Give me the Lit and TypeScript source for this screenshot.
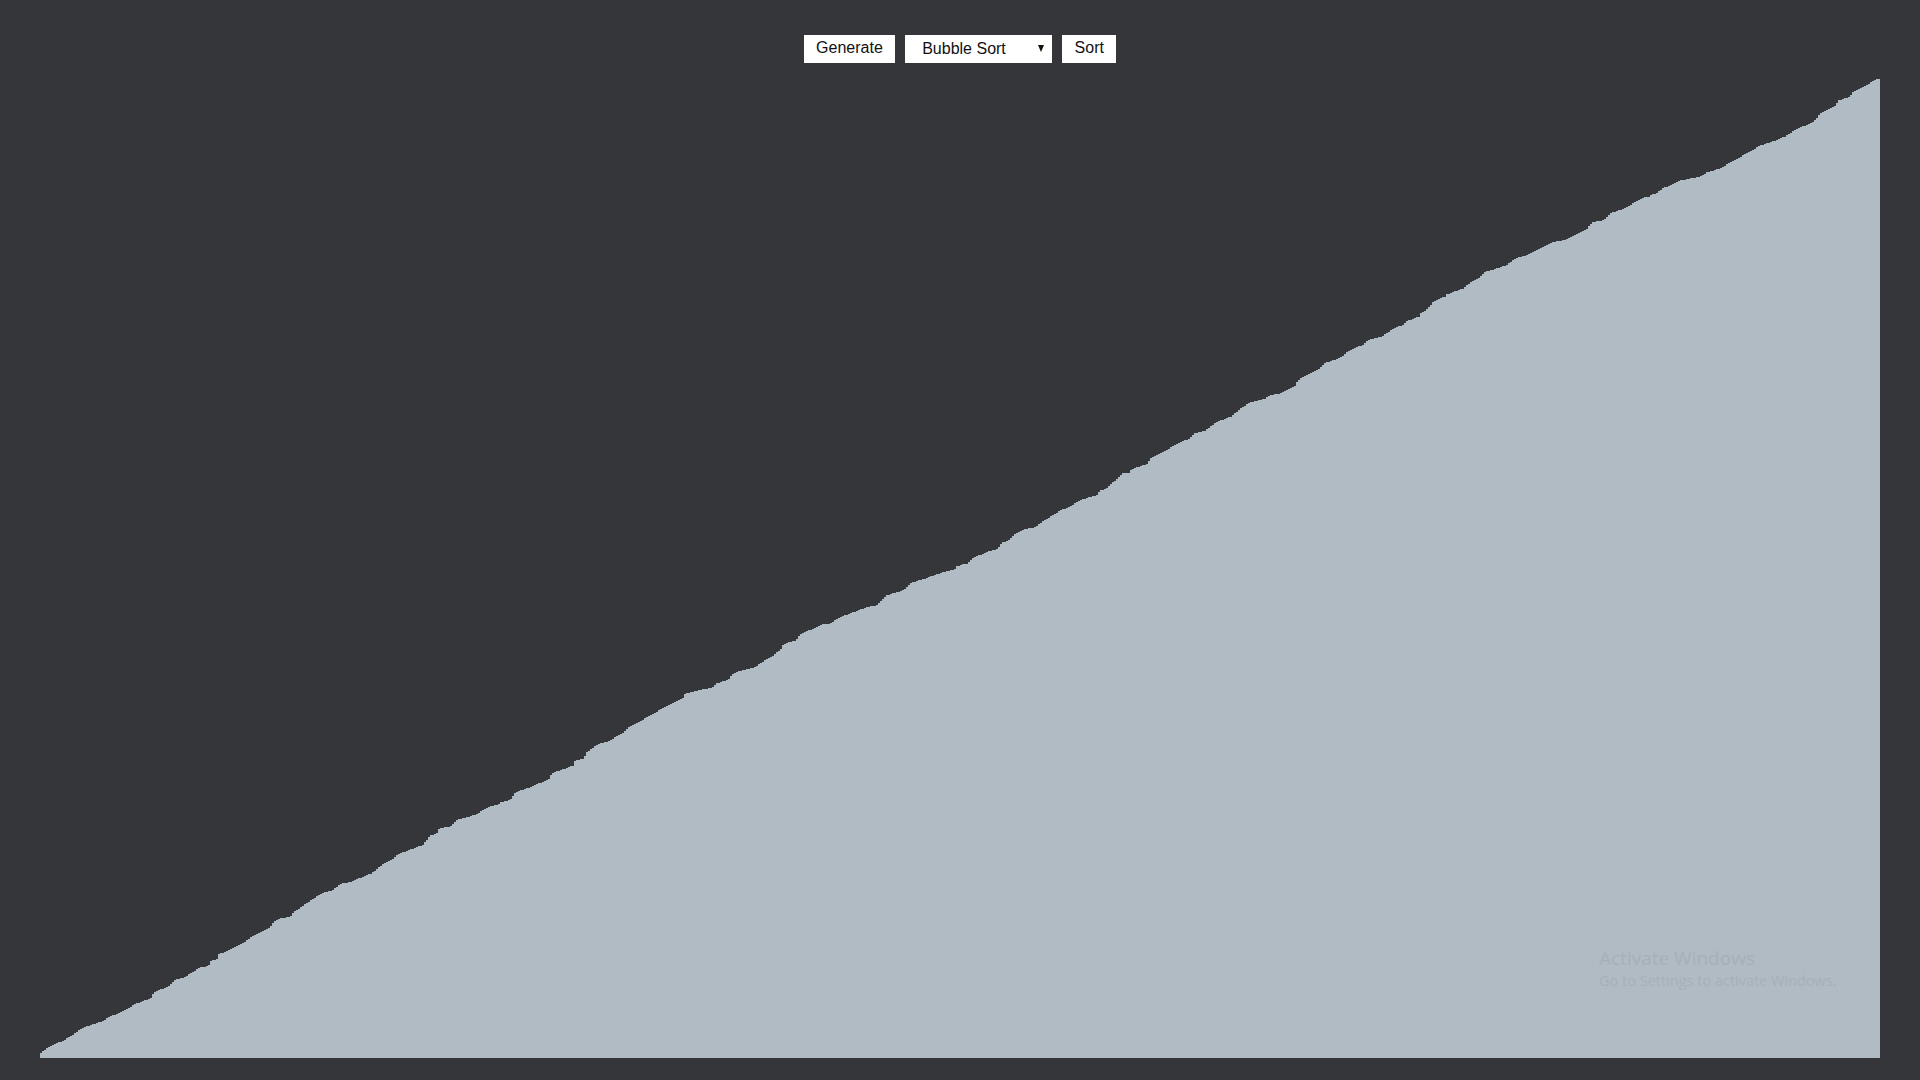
import { LitElement, html, css } from "lit";
import { customElement } from "lit/decorators.js";

const SEGMENTS: [number, number, number[]][] = [
  [40, 908, [0,436,18,424,30,414,66,400,100,380,125,360,160,349,190,338,205,328,250,310,285,288,335,270,340,255,390,232,403,216,435,207,480,178,505,174,513,158,530,156,535,140,575,122,605,108,630,90,660,72,690,60]],
  [270, 786, [0,425,10,408,35,396,62,392,70,380,95,362,125,342,155,322,185,314,215,291,235,290,305,262,345,230,365,222,385,205,410,195,460,176,480,148,500,144,507,128,545,120,560,102,620,85,650,65,690,54]],
  [500, 664, [0,416,30,408,45,388,60,380,95,368,150,344,155,328,220,305,225,290,250,285,260,265,295,240,325,232,370,205,385,190,460,150,500,125,550,102,555,90,590,80,640,70,650,58,690,45]],
  [730, 542, [0,405,10,394,40,384,70,378,100,358,130,340,155,320,160,306,195,296,215,275,245,262,270,252,280,245,300,245,330,226,385,205,415,194,440,190,470,160,495,152,520,145,545,122,590,108,640,90,675,82,680,72,690,72]],
  [960, 420, [0,434,20,432,40,414,85,394,115,386,125,368,145,362,165,342,190,328,225,322,240,310,300,272,330,260,360,240,410,226,420,212,440,205,480,168,490,158,510,158,515,147,560,132,575,112,620,90,650,72,690,55]],
  [1190, 298, [0,418,15,406,45,398,80,372,125,355,155,328,185,312,225,302,240,292,270,286,315,264,325,246,345,234,385,215,405,195,450,180,480,156,520,140,535,126,575,116,610,92,640,80,650,70,690,55]],
  [1420, 176, [0,414,25,397,40,376,75,362,80,355,130,338,150,320,185,300,195,288,260,268,285,248,330,234,395,200,440,190,500,160,515,140,550,132,575,110,620,95,650,75,680,62,690,62]],
  [1650, 54, [0,422,15,420,40,402,65,392,90,380,155,367,170,355,215,342,240,325,265,312,305,290,330,275,375,260,405,248,440,225,490,205,510,180,555,155,565,140,600,128,610,113,640,98,680,76,690,75]],
];

const BASELINE = 1058;
const LEFT = 40;
const BAR_COUNT = 920;
const BAR_WIDTH = 2;

function profile(): number[] {
  const pts: [number, number][] = [];
  for (const [x0, y0, list] of SEGMENTS) {
    for (let i = 0; i < list.length; i += 2) {
      pts.push([x0 + list[i] / 3, y0 + list[i + 1] / 3]);
    }
  }
  const heights: number[] = [];
  let p = 0;
  let prev = 0;
  for (let i = 0; i < BAR_COUNT; i++) {
    const x = LEFT + i * BAR_WIDTH + BAR_WIDTH / 2;
    while (p < pts.length - 2 && pts[p + 1][0] < x) p++;
    const [ax, ay] = pts[p];
    const [bx, by] = pts[p + 1];
    const t = Math.max(0, Math.min(1, (x - ax) / Math.max(bx - ax, 0.001)));
    const h = Math.round(BASELINE - (ay + (by - ay) * t));
    prev = Math.max(prev, h);
    heights.push(prev);
  }
  return heights;
}

const HEIGHTS = profile();

@customElement("app-root")
export class AppRoot extends LitElement {
  static styles = css`
    :host {
      display: flex;
      flex-direction: column;
      position: relative;
      height: 100vh;
      box-sizing: border-box;
      padding: 35px 40px 22px;
      background: #35363a;
      font-family: "Liberation Sans", Arial, sans-serif;
      overflow: hidden;
    }
    .toolbar {
      display: flex;
      justify-content: center;
      gap: 10px;
      height: 28px;
      flex: none;
    }
    button,
    select {
      height: 28px;
      margin: 0;
      border: 0;
      border-radius: 0;
      background: #fff;
      color: #111;
      font: 16px "Liberation Sans", Arial, sans-serif;
      box-sizing: border-box;
    }
    button {
      padding: 0 12.4px 2px;
    }
    .pick {
      position: relative;
      display: block;
      width: 147px;
      height: 28px;
    }
    select {
      appearance: none;
      -webkit-appearance: none;
      width: 100%;
      padding: 0 0 1px 17px;
      outline: none;
    }
    .arrow {
      position: absolute;
      top: 10px;
      right: 8px;
      width: 0;
      height: 0;
      border-left: 3px solid transparent;
      border-right: 3px solid transparent;
      border-top: 7px solid #111;
      pointer-events: none;
    }
    .chart {
      flex: 1;
      display: flex;
      align-items: flex-end;
      min-height: 0;
    }
    .bar {
      flex: 1 1 0;
      background: #b1bbc3;
    }
    .watermark {
      position: absolute;
      left: 1599px;
      top: 945px;
      color: #a6b0b8;
      font-family: "Open Sans", "Noto Sans", sans-serif;
      pointer-events: none;
    }
    .wm-title {
      font-size: 19px;
      line-height: 26px;
    }
    .wm-sub {
      font-size: 14.5px;
      line-height: 20px;
    }
  `;

  render() {
    return html`
      <div class="toolbar">
        <button>Generate</button>
        <label class="pick">
          <select>
            <option>Bubble Sort</option>
            <option>Insertion Sort</option>
            <option>Merge Sort</option>
            <option>Quick Sort</option>
          </select>
          <span class="arrow"></span>
        </label>
        <button>Sort</button>
      </div>
      <div class="chart">
        ${HEIGHTS.map((h) => html`<div class="bar" style="height:${h}px"></div>`)}
      </div>
      <div class="watermark">
        <div class="wm-title">Activate Windows</div>
        <div class="wm-sub">Go to Settings to activate Windows.</div>
      </div>
    `;
  }
}
